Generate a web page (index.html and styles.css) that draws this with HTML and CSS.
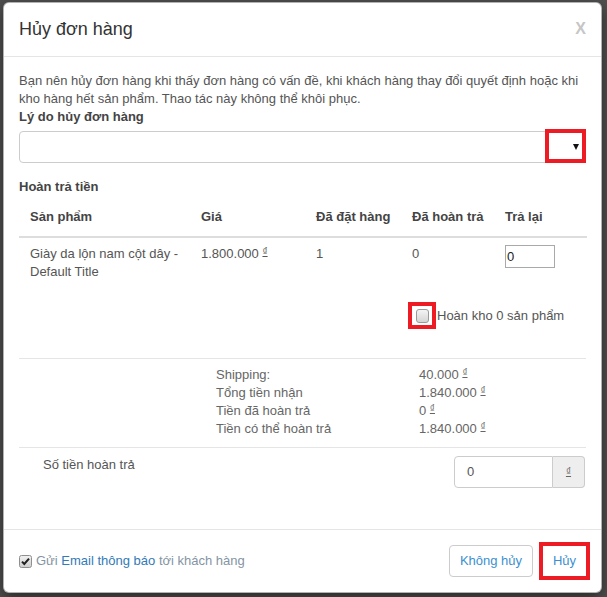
FILE: index.html
```html
<!DOCTYPE html>
<html lang="vi">
<head>
<meta charset="utf-8">
<title>Hủy đơn hàng</title>
<link rel="stylesheet" href="styles.css">
</head>
<body>
<div class="backdrop">
  <div class="modal">
    <div class="modal-header">
      <h4 class="modal-title">Hủy đơn hàng</h4>
      <span class="close">X</span>
    </div>
    <div class="modal-body">
      <p class="intro">Bạn nên hủy đơn hàng khi thấy đơn hàng có vấn đề, khi khách hàng thay đổi quyết định hoặc khi<br>kho hàng hết sản phẩm. Thao tác này không thể khôi phục.</p>
      <div class="field-label">Lý do hủy đơn hàng</div>
      <div class="select-box">
        <span class="caret"></span>
        <span class="mark mark-select"></span>
      </div>
      <div class="section-title">Hoàn trả tiền</div>
      <table class="items">
        <colgroup>
          <col class="c1"><col class="c2"><col class="c3"><col class="c4"><col class="c5">
        </colgroup>
        <thead>
          <tr><th>Sản phẩm</th><th>Giá</th><th>Đã đặt hàng</th><th>Đã hoàn trả</th><th>Trả lại</th></tr>
        </thead>
        <tbody>
          <tr>
            <td>Giày da lộn nam cột dây -<br>Default Title</td>
            <td>1.800.000 <span class="cur">₫</span></td>
            <td>1</td>
            <td>0</td>
            <td><span class="qty">0</span></td>
          </tr>
        </tbody>
      </table>
      <div class="restock">
        <span class="mark mark-check"><span class="cb"></span></span>
        <span class="restock-label">Hoàn kho 0 sản phẩm</span>
      </div>
      <div class="summary">
        <span>Shipping:</span><span>40.000 <span class="cur">₫</span></span>
        <span>Tổng tiền nhận</span><span>1.840.000 <span class="cur">₫</span></span>
        <span>Tiền đã hoàn trả</span><span>0 <span class="cur">₫</span></span>
        <span>Tiền có thể hoàn trả</span><span>1.840.000 <span class="cur">₫</span></span>
      </div>
      <div class="refund">
        <span class="refund-label">Số tiền hoàn trả</span>
        <div class="input-group">
          <span class="ig-input">0</span>
          <span class="ig-addon"><span class="cur">₫</span></span>
        </div>
      </div>
    </div>
    <div class="modal-footer">
      <div class="notify">
        <svg class="cb-checked" width="13" height="13" viewBox="0 0 13 13">
          <defs>
            <linearGradient id="g" x1="0" y1="0" x2="0" y2="1">
              <stop offset="0" stop-color="#f2f2f2"/>
              <stop offset="1" stop-color="#cfcfcf"/>
            </linearGradient>
          </defs>
          <rect x="0.5" y="0.5" width="12" height="12" rx="2" fill="url(#g)" stroke="#8f8f8f"/>
          <path d="M3 6.6 L5.3 9 L10 3.6" fill="none" stroke="#222" stroke-width="2"/>
        </svg>
        <span class="notify-text">Gửi <span class="link">Email thông báo</span> tới khách hàng</span>
      </div>
      <div class="actions">
        <span class="btn">Không hủy</span>
        <span class="btn btn-confirm">Hủy</span>
      </div>
    </div>
  </div>
</div>
</body>
</html>
```
FILE: styles.css
```css
* { box-sizing: border-box; }

html, body {
  margin: 0;
  padding: 0;
}

body {
  background: #505050;
  font-family: "Liberation Sans", Arial, sans-serif;
  font-size: 13px;
  line-height: 18px;
  color: #555;
  width: 607px;
  height: 597px;
  overflow: hidden;
}

.backdrop {
  padding: 2px 5px 0 3px;
}

.modal {
  width: 599px;
  background: #fff;
  border: 1px solid rgba(0, 0, 0, 0.3);
  border-radius: 6px;
  box-shadow: 0 5px 15px rgba(0, 0, 0, 0.5);
}

.modal-header {
  display: flex;
  justify-content: space-between;
  align-items: center;
  padding: 13px 15px 14px;
  border-bottom: 1px solid #e5e5e5;
}

.modal-title {
  margin: 0;
  font-size: 18px;
  line-height: 26px;
  font-weight: normal;
  color: #333;
}

.close {
  font-size: 16px;
  font-weight: bold;
  color: #c6c6c6;
  line-height: 26px;
}

.modal-body {
  padding: 15px 15px;
}

.intro {
  margin: 0;
}

.field-label {
  font-weight: bold;
  color: #444;
  margin-bottom: 5px;
}

.select-box {
  position: relative;
  height: 32px;
  border: 1px solid #ccc;
  border-radius: 4px;
  display: flex;
  align-items: center;
  justify-content: flex-end;
  padding-right: 6px;
}

.caret {
  width: 0;
  height: 0;
  border-left: 3.5px solid transparent;
  border-right: 3.5px solid transparent;
  border-top: 6px solid #111;
}

.mark {
  border: 4px solid #ed1c24;
}

.mark-select {
  position: absolute;
  right: -1px;
  top: -3px;
  width: 41px;
  height: 34px;
}

.section-title {
  margin-top: 15px;
  font-weight: bold;
  color: #444;
}

.items {
  width: 568px;
  table-layout: fixed;
  border-collapse: collapse;
}

.c1 { width: 171px; }
.c2 { width: 115px; }
.c3 { width: 96px; }
.c4 { width: 93px; }
.c5 { width: 93px; }

.items th {
  text-align: left;
  font-weight: bold;
  color: #444;
  white-space: nowrap;
  padding: 12px 11px 10px;
  border-bottom: 2px solid #ddd;
}

.items td {
  vertical-align: top;
  padding: 7px 11px 8px;
}

.cur {
  font-size: 10px;
  line-height: 0;
  position: relative;
  top: -3px;
  text-decoration: underline;
}

.qty {
  display: block;
  width: 50px;
  height: 23px;
  border: 1px solid #a9a9a9;
  color: #222;
  padding: 2px 1px;
  line-height: 17px;
}

.restock {
  margin-top: 13px;
  margin-bottom: 29px;
  padding-left: 389px;
  display: flex;
  align-items: center;
  height: 27px;
}

.mark-check {
  width: 28px;
  height: 27px;
  display: flex;
  align-items: center;
  justify-content: center;
}

.cb {
  width: 13px;
  height: 14px;
  border: 1px solid #9a9a9a;
  border-radius: 3px;
  background: linear-gradient(#f4f4f4, #d5d5d5);
}

.restock-label {
  margin-left: 1px;
  color: #555;
}

.summary {
  border-top: 1px solid #e5e5e5;
  padding: 7px 0 9px 197px;
  display: grid;
  grid-template-columns: 203px auto;
  color: #666;
}

.refund {
  border-top: 1px solid #e5e5e5;
  padding-top: 8px;
  margin-bottom: 26px;
  display: flex;
  justify-content: space-between;
  align-items: flex-start;
}

.refund-label {
  padding-left: 24px;
  color: #555;
}

.input-group {
  display: flex;
  width: 131px;
  height: 32px;
  margin-right: 1px;
}

.ig-input {
  flex: 1;
  border: 1px solid #ccc;
  border-radius: 4px 0 0 4px;
  padding: 6px 12px;
  line-height: 18px;
  color: #555;
}

.ig-addon {
  width: 32px;
  border: 1px solid #ccc;
  border-left: none;
  border-radius: 0 4px 4px 0;
  background: #eee;
  display: flex;
  align-items: center;
  justify-content: center;
  color: #666;
}

.ig-addon .cur {
  top: 0;
}

.modal-footer {
  border-top: 1px solid #e5e5e5;
  padding: 15px;
  display: flex;
  justify-content: space-between;
  align-items: center;
}

.notify {
  display: flex;
  align-items: center;
  gap: 4px;
}

.cb-checked {
  display: block;
}

.notify-text {
  color: #8494a3;
}

.link {
  color: #337ab7;
}

.actions {
  display: flex;
  align-items: center;
  gap: 10px;
}

.btn {
  height: 32px;
  width: 84px;
  border: 1px solid #ccc;
  border-radius: 4px;
  display: flex;
  align-items: center;
  justify-content: center;
  color: #3d8fd1;
  background: #fff;
}

.btn-confirm {
  width: 43px;
  height: 30px;
  border-color: #fff;
  border-radius: 0;
  outline: 4px solid #ed1c24;
}
```
